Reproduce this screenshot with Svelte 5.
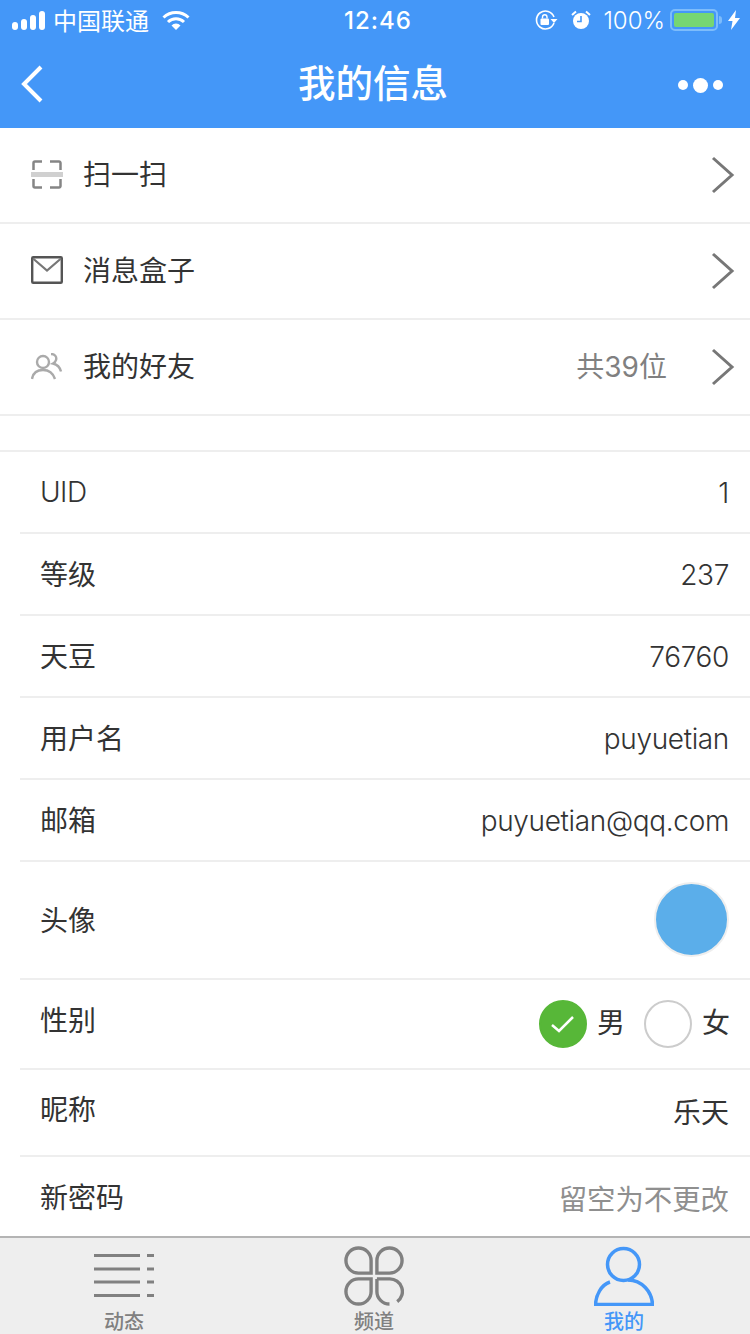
<script>
  const menu = [
    { icon: 'scan', label: '扫一扫' },
    { icon: 'mail', label: '消息盒子' },
    { icon: 'friends', label: '我的好友', extra: '共39位' }
  ];
  const info = [
    { label: 'UID', value: '1' },
    { label: '等级', value: '237' },
    { label: '天豆', value: '76760' },
    { label: '用户名', value: 'puyuetian' },
    { label: '邮箱', value: 'puyuetian@qq.com' }
  ];
</script>

<div class="page">
  <header class="top">
    <div class="status">
      <div class="side">
        <span class="signal"><i></i><i></i><i></i><i></i></span>
        <span class="carrier">中国联通</span>
        <svg class="wifi" width="28" height="20" viewBox="0 0 28 20">
          <path d="M1.5 7.5a18 18 0 0 1 25 0" fill="none" stroke="#fff" stroke-width="3" />
          <path d="M6 12a11.500 11.500 0 0 1 16 0" fill="none" stroke="#fff" stroke-width="3" />
          <path d="M9.500 15.500a6 6 0 0 1 9 0L14 20z" fill="#fff" />
        </svg>
      </div>
      <span class="time">12:46</span>
      <div class="side right">
        <svg width="24" height="22" viewBox="0 0 24 22">
          <path d="M20 8a9 9 0 1 0 0 6" fill="none" stroke="#fff" stroke-width="1.600" />
          <path d="M16.500 10h7l-3.500 4z" fill="#fff" />
          <rect x="6.500" y="9.500" width="8.500" height="6.500" rx="1" fill="#fff" />
          <path d="M8.500 9.500V8a2.200 2.200 0 0 1 4.500 0v1.500" fill="none" stroke="#fff" stroke-width="1.400" />
        </svg>
        <svg class="alarm" width="20" height="20" viewBox="0 0 20 20">
          <circle cx="10" cy="11" r="8" fill="#fff" />
          <path d="M10 6v5.500H6" fill="none" stroke="#4497f8" stroke-width="1.600" />
          <path d="M1 5l4-3.500M19 5l-4-3.500" stroke="#fff" stroke-width="2" />
        </svg>
        <span class="pct">100%</span>
        <span class="battery"><b></b></span>
        <span class="nub"></span>
        <svg width="12" height="20" viewBox="0 0 12 20"><path d="M8 0L0 11h4.500L3 20l9-12H7z" fill="#fff" /></svg>
      </div>
    </div>
    <nav class="nav">
      <svg class="back" width="24" height="38" viewBox="0 0 24 38">
        <path d="M21 2L4 19l17 17" fill="none" stroke="#fff" stroke-width="4" />
      </svg>
      <h1>我的信息</h1>
      <div class="dots"><i></i><i class="big"></i><i></i></div>
    </nav>
  </header>

  <main class="content">
    <section class="menu">
      {#each menu as m}
        <div class="menu-row">
          <span class="menu-icon">
            {#if m.icon === 'scan'}
              <svg width="32" height="30" viewBox="0 0 32 30" fill="none">
                <path d="M2.500 10V3a1.500 1.500 0 0 1 1.500-1.500H11M19 1.500h9A1.500 1.500 0 0 1 29.500 3v7M2.500 19v7a1.500 1.500 0 0 0 1.500 1.500H11M19 27.500h9a1.500 1.500 0 0 0 1.500-1.500v-7" stroke="#858585" stroke-width="2.500" />
                <path d="M0 14.500h32" stroke="#d0d0d0" stroke-width="5" />
              </svg>
            {:else if m.icon === 'mail'}
              <svg class="mail" width="32" height="28" viewBox="0 0 32 28" fill="none">
                <rect x="1.200" y="1.200" width="29.600" height="25.600" rx="1" stroke="#555" stroke-width="2.400" />
                <path d="M2 2.500l14 12 14-12" stroke="#777" stroke-width="2.200" />
              </svg>
            {:else}
              <svg width="32" height="28" viewBox="0 0 32 28" fill="none">
                <circle cx="12" cy="9" r="6" stroke="#aaa" stroke-width="2.400" />
                <path d="M1 26c1-6 5-9 11-9s10 3 12 9" stroke="#aaa" stroke-width="2.400" />
                <path d="M20 1c4 0 6 3 5 6-.5 2-2 3-3 3.500 4 1 7 4 8 8" stroke="#aaa" stroke-width="2.400" />
              </svg>
            {/if}
          </span>
          <span class="menu-label">{m.label}</span>
          {#if m.extra}<span class="menu-extra">{m.extra}</span>{/if}
          <svg class="chev" width="24" height="38" viewBox="0 0 24 38" fill="none">
            <path d="M2 2l19 17L2 36" stroke="#777" stroke-width="3" />
          </svg>
        </div>
      {/each}
    </section>

    <section class="info">
      {#each info as r}
        <div class="info-row">
          <span class="label">{r.label}</span>
          <span class="value">{r.value}</span>
        </div>
      {/each}
      <div class="info-row avatar-row">
        <span class="label">头像</span>
        <span class="avatar"></span>
      </div>
      <div class="info-row gender-row">
        <span class="raised">性别</span>
        <div class="radios">
          <span class="radio checked">
            <svg width="26" height="20" viewBox="0 0 26 20" fill="none"><path d="M2 11l7 6L23 3" stroke="#fff" stroke-width="2.500" /></svg>
          </span>
          <span class="radio-text">男</span>
          <span class="radio"></span>
          <span class="radio-text">女</span>
        </div>
      </div>
      <div class="info-row nick-row">
        <span class="raised">昵称</span>
        <span class="cjk-value">乐天</span>
      </div>
      <div class="info-row last-row">
        <span class="cjk-value">新密码</span>
        <span class="placeholder">留空为不更改</span>
      </div>
    </section>
  </main>

  <footer class="tabs">
    <div class="tab">
      <svg width="60" height="60" viewBox="0 0 60 60" fill="none" stroke="#808080" stroke-width="3">
        <path d="M0 9.500h46M53 9.500h7M0 23h46M53 23h7M0 36h46M53 36h7M0 49.500h46M53 49.500h7" />
      </svg>
      <span>动态</span>
    </div>
    <div class="tab">
      <svg width="60" height="60" viewBox="0 0 62 62" fill="none" stroke="#808080" stroke-width="3.500">
        <path d="M28 28H15a13 13 0 1 1 13-13zM34 28V15a13 13 0 1 1 13 13zM28 34v13a13 13 0 1 1-13-13zM34 34h13a13 13 0 0 1 8 23.500M47 60a13 13 0 0 1-13-13V34" />
      </svg>
      <span>频道</span>
    </div>
    <div class="tab active">
      <svg width="60" height="60" viewBox="0 0 60 60" fill="none" stroke="#4497f8" stroke-width="3.500">
        <circle cx="29.500" cy="18.500" r="16" />
        <path d="M16 36C7 39 2 49 1.500 58.500h57C58 46 48 34 34 34" />
      </svg>
      <span>我的</span>
    </div>
  </footer>
</div>

<style>
  :global(body) {
    margin: 0;
    background: #fff;
  }

  .page {
    width: 750px;
    height: 1334px;
    display: flex;
    flex-direction: column;
    overflow: hidden;
    font-family: "Inter", "Noto Sans CJK SC", sans-serif;
    font-weight: 400;
    color: #333;
  }

  .top {
    background: #4497f8;
    color: #fff;
    flex: none;
  }

  .status {
    height: 40px;
    padding: 0 10px 0 12px;
    display: flex;
    align-items: center;
    justify-content: space-between;
    position: relative;
  }

  .side {
    display: flex;
    align-items: center;
  }

  .signal {
    display: flex;
    align-items: flex-end;
    gap: 3px;
    margin-right: 8px;
  }

  .signal i {
    width: 6px;
    border-radius: 3px;
    background: #fff;
  }

  .signal i:nth-child(1) { height: 8px; }
  .signal i:nth-child(2) { height: 11px; }
  .signal i:nth-child(3) { height: 15px; }
  .signal i:nth-child(4) { height: 19px; }

  .carrier {
    font-size: 24px;
    margin: 0 13px 2px 0;
  }

  .time {
    position: absolute;
    left: 344px;
    font-size: 24px;
    font-weight: 500;
    letter-spacing: 1px;
  }

  .alarm {
    margin: 0 12px 0 13px;
  }

  .pct {
    font-size: 24px;
    font-weight: 300;
    margin-right: 5px;
  }

  .battery {
    width: 48px;
    height: 22px;
    box-sizing: border-box;
    border: 2px solid #7dbcfb;
    border-radius: 5px;
    padding: 2px;
    display: flex;
  }

  .battery b {
    flex: 1;
    background: #76d672;
    border-radius: 2px;
  }

  .nub {
    width: 3px;
    height: 8px;
    background: #7dbcfb;
    border-radius: 0 3px 3px 0;
    margin: 0 6px 0 1px;
  }

  .nav {
    height: 88px;
    display: flex;
    align-items: center;
    justify-content: space-between;
    padding: 0 27px 0 20px;
    position: relative;
  }

  .nav h1 {
    margin: 0;
    position: absolute;
    left: 0;
    right: 4px;
    text-align: center;
    font-size: 37.500px;
    font-weight: 500;
    line-height: 90px;
    pointer-events: none;
  }

  .dots {
    display: flex;
    align-items: center;
    gap: 5px;
    padding-top: 2px;
  }

  .dots i {
    width: 10px;
    height: 10px;
    border-radius: 50%;
    background: #fff;
  }

  .dots i.big {
    width: 15px;
    height: 15px;
  }

  .content {
    flex: 1;
    min-height: 0;
    overflow: hidden;
  }

  .menu {
    border-bottom: 2px solid #eee;
    margin-bottom: 34px;
  }

  .menu-row {
    height: 94px;
    display: flex;
    align-items: center;
    padding: 0 15px 0 31px;
    border-bottom: 2px solid #eee;
  }

  .menu-row:last-child {
    border-bottom: 0;
  }

  .menu-icon {
    width: 32px;
    height: 32px;
    margin-right: 20px;
    display: flex;
    align-items: center;
    justify-content: center;
  }

  .mail {
    margin-bottom: 2px;
  }

  .menu-label {
    font-size: 28px;
    flex: 1;
    margin-bottom: 5px;
  }

  .menu-extra {
    font-size: 28px;
    color: #808080;
    margin: 0 44px 4px 0;
  }

  .info {
    border-top: 2px solid #eee;
  }

  .info-row {
    height: 80px;
    margin-left: 20px;
    padding: 0 20px;
    display: flex;
    align-items: center;
    justify-content: space-between;
    font-size: 28px;
    border-bottom: 2px solid #eee;
  }

  .label {
    margin-bottom: 2px;
  }

  .info-row:first-child .label {
    margin-bottom: 0;
    font-weight: 300;
    letter-spacing: -0.500px;
  }

  .value {
    font-weight: 300;
    letter-spacing: -0.350px;
    margin: 2px 1px 0 0;
  }

  .avatar-row {
    height: 116px;
  }

  .avatar {
    width: 71px;
    height: 71px;
    border-radius: 50%;
    background: #5baeea;
    border: 2px solid #eee;
    margin: 0 1px 1px 0;
  }

  .gender-row {
    height: 88px;
  }

  .nick-row {
    height: 85px;
  }

  .last-row {
    height: 82px;
    border-bottom: 0;
  }

  .raised {
    margin-bottom: 10px;
  }

  .cjk-value {
    margin: 0 1px 4px 0;
  }

  .radios {
    display: flex;
    align-items: center;
  }

  .radio {
    width: 44px;
    height: 44px;
    border: 2px solid #ccc;
    border-radius: 50%;
    display: flex;
    align-items: center;
    justify-content: center;
  }

  .radio.checked {
    background: #57b738;
    border-color: #57b738;
  }

  .radio-text {
    margin: 0 19px 6px 10px;
  }

  .radio-text:last-child {
    margin-right: 0;
  }

  .placeholder {
    color: #8f8f8f;
    font-size: 28.400px;
    margin: 0 1px 2px 0;
  }

  .tabs {
    flex: none;
    height: 98px;
    box-sizing: border-box;
    padding-top: 8px;
    background: #eee;
    border-top: 2px solid #b4b4b4;
    display: flex;
    gap: 2px;
    overflow: hidden;
  }

  .tab {
    flex: 0 0 248px;
    display: flex;
    flex-direction: column;
    align-items: center;
    font-size: 20px;
    color: #808080;
    line-height: 26px;
    font-weight: 500;
  }

  .tab svg {
    flex: none;
  }

  .tab span {
    margin-top: 3px;
  }

  .tab.active {
    color: #4497f8;
  }
</style>
